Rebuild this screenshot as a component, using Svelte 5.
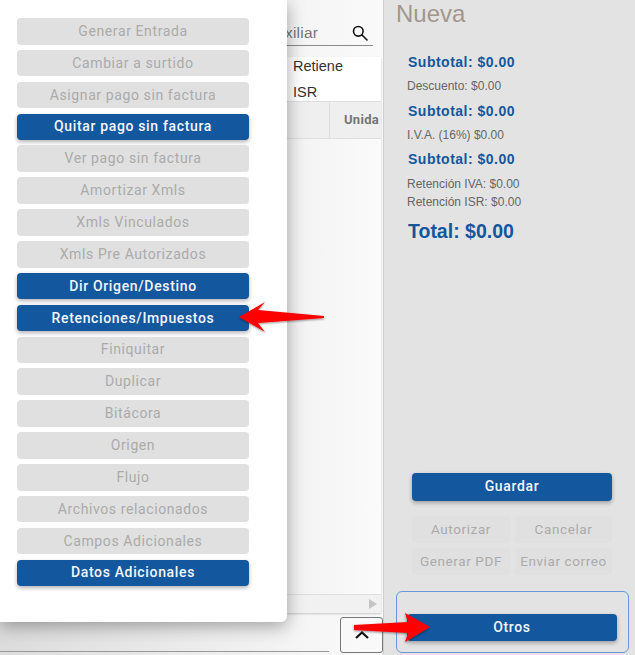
<script>
	const menu = [
		['Generar Entrada', false],
		['Cambiar a surtido', false],
		['Asignar pago sin factura', false],
		['Quitar pago sin factura', true],
		['Ver pago sin factura', false],
		['Amortizar Xmls', false],
		['Xmls Vinculados', false],
		['Xmls Pre Autorizados', false],
		['Dir Origen/Destino', true],
		['Retenciones/Impuestos', true],
		['Finiquitar', false],
		['Duplicar', false],
		['Bitácora', false],
		['Origen', false],
		['Flujo', false],
		['Archivos relacionados', false],
		['Campos Adicionales', false],
		['Datos Adicionales', true]
	];
</script>

<div class="page">
	<div class="main">
		<div class="search">
			<span>xiliar</span>
			<svg width="16" height="16" viewBox="0 0 16 16" fill="none" stroke="#111" stroke-width="1.6">
				<circle cx="6.3" cy="6.3" r="4.8" />
				<path d="M9.8 9.8L15 15" stroke-linecap="round" />
			</svg>
		</div>
		<div class="table">
			<div class="filters">
				<span>Retiene</span>
				<span>ISR</span>
			</div>
			<div class="head">
				<div class="cell first"></div>
				<div class="cell">Unida</div>
			</div>
			<div class="body"></div>
			<div class="scroll">
				<svg width="10" height="12" viewBox="0 0 10 12"><path d="M1 1L9 6L1 11Z" fill="#c4c4c4" /></svg>
			</div>
		</div>
		<div class="bottom">
			<div class="underline"></div>
			<div class="toggle">
				<svg width="16" height="10" viewBox="0 0 16 10" fill="none" stroke="#111" stroke-width="2.2"><path d="M2 8L8 2.5L14 8" /></svg>
			</div>
		</div>
	</div>

	<div class="side">
		<h1>Nueva</h1>
		<div class="totals">
			<p class="sub">Subtotal: $0.00</p>
			<p class="row">Descuento: $0.00</p>
			<p class="sub">Subtotal: $0.00</p>
			<p class="row">I.V.A. (16%) $0.00</p>
			<p class="sub">Subtotal: $0.00</p>
			<p class="row gap">Retención IVA: $0.00</p>
			<p class="row tight">Retención ISR: $0.00</p>
			<p class="total">Total: $0.00</p>
		</div>
		<div class="actions">
			<button class="btn on">Guardar</button>
			<div class="grid">
				<button class="btn soft">Autorizar</button>
				<button class="btn soft">Cancelar</button>
				<button class="btn soft">Generar PDF</button>
				<button class="btn soft">Enviar correo</button>
			</div>
		</div>
		<div class="others">
			<button class="btn on">Otros</button>
		</div>
	</div>

	<div class="menu">
		{#each menu as [label, active]}
			<button class="btn" class:on={active}>{label}</button>
		{/each}
	</div>

	<svg class="arrows" width="635" height="655" viewBox="0 0 635 655">
		<defs>
			<filter id="sh" x="-20%" y="-20%" width="140%" height="150%">
				<feDropShadow dx="0" dy="1" stdDeviation="1" flood-color="#000" flood-opacity="0.45" />
			</filter>
		</defs>
		<path filter="url(#sh)" fill="#fe0000" d="M239 317L265 302L258 310L324 316V318L258 323L265 332Z" />
		<path filter="url(#sh)" fill="#fe0000" d="M430 627L405 613L408 622L354 625V630L408 633L405 642Z" />
	</svg>
</div>

<style>
	:global(body) {
		margin: 0;
	}

	.page {
		position: relative;
		display: flex;
		width: 635px;
		height: 655px;
		overflow: hidden;
		background: #fff;
		font-family: "Liberation Sans", Arial, sans-serif;
	}

	.main {
		display: flex;
		flex-direction: column;
		width: 384px;
		background: linear-gradient(90deg, #dcdcdc 0, #f6f6f6 312px, #fafafa 100%);
		box-sizing: border-box;
		border-right: 1px solid #cfcfcf;
	}

	.search {
		display: flex;
		align-items: center;
		justify-content: space-between;
		box-sizing: border-box;
		width: 88px;
		height: 46px;
		margin-left: 285px;
		padding: 20px 5px 0 0;
		border-bottom: 1px solid #8a8a8a;
		font-size: 15.5px;
		letter-spacing: 0.2px;
		color: #777;
	}

	.table {
		display: flex;
		flex: none;
		flex-direction: column;
		height: 556px;
		width: 94px;
		margin: 11px 0 0 287px;
		background: linear-gradient(90deg, #f2f2f2, #fbfbfb);
		box-shadow: 0 1px 2px rgba(0, 0, 0, 0.2);
	}

	.filters {
		display: flex;
		flex-direction: column;
		gap: 8px;
		height: 44px;
		padding-left: 6px;
		font-size: 14.5px;
		line-height: 18px;
		color: #333;
		background: #fff;
		border-bottom: 1px solid #dedede;
	}

	.head {
		display: flex;
		height: 36px;
		border-bottom: 1px solid #dedede;
		background: #efefef;
	}

	.cell {
		flex: 1;
		overflow: hidden;
		padding: 10px 0 0 14px;
		font-size: 13px;
		font-weight: 700;
		letter-spacing: 0.3px;
		white-space: nowrap;
		color: #757575;
		font-family: Roboto, sans-serif;
	}

	.cell.first {
		flex: none;
		width: 43px;
		box-sizing: border-box;
		border-right: 1px solid #dedede;
	}

	.body {
		flex: 1;
		border-bottom: 1px solid #dedede;
	}

	.scroll {
		display: flex;
		align-items: center;
		justify-content: flex-end;
		height: 18px;
		padding-right: 3px;
		background: #f1f1f1;
	}

	.bottom {
		display: flex;
		align-items: flex-end;
		flex: 1;
	}

	.underline {
		width: 329px;
		height: 1px;
		margin-bottom: 3px;
		background: #999;
	}

	.toggle {
		display: flex;
		align-items: center;
		justify-content: center;
		box-sizing: border-box;
		width: 43px;
		height: 36px;
		margin: 0 0 2px 11px;
		border: 1px solid #777;
		border-radius: 3px;
	}

	.side {
		display: flex;
		flex-direction: column;
		flex: 1;
		box-sizing: border-box;
		padding: 0 6px 2px 12px;
		background: #e3e3e3;
	}

	h1 {
		margin: 0;
		font-size: 24px;
		font-weight: 400;
		line-height: 28px;
		color: #a1978e;
	}

	.totals {
		margin: 25px 0 0 12px;
	}

	.totals p {
		margin: 0;
		white-space: nowrap;
	}

	.sub {
		padding-bottom: 7px;
		font-size: 14px;
		font-weight: 700;
		line-height: 18px;
		letter-spacing: 0.5px;
		color: #13579f;
	}

	.row {
		margin-left: -1px !important;
		padding-bottom: 7.5px;
		font-size: 12px;
		line-height: 16px;
		color: #666;
	}

	.row.gap {
		padding-top: 1px;
	}

	.row.tight {
		margin-top: -5.5px !important;
	}

	.total {
		padding-top: 1px;
		font-size: 19.5px;
		font-weight: 700;
		line-height: 24px;
		color: #13579f;
	}

	.actions {
		display: flex;
		flex: none;
		flex-direction: column;
		gap: 15px;
		margin: 230px 0 0 16px;
		width: 200px;
	}

	.grid {
		display: grid;
		grid-template-columns: 98px 97px;
		gap: 5px;
	}

	.others {
		display: flex;
		flex: none;
		align-items: flex-end;
		box-sizing: border-box;
		height: 62px;
		margin-top: auto;
		padding: 0 11px 11px 10px;
		border: 1px solid #6d97d6;
		border-radius: 6px;
	}

	.others .btn {
		flex: 1;
		height: 27px;
	}

	.menu {
		position: absolute;
		left: 0;
		top: 0;
		display: flex;
		flex-direction: column;
		gap: 5.28px;
		box-sizing: border-box;
		width: 287px;
		height: 622px;
		padding: 18px 38px 0 17px;
		background: #fff;
		border-radius: 0 0 6px 0;
		box-shadow: 0 4px 18px rgba(0, 0, 0, 0.35);
	}

	.btn {
		display: block;
		flex: none;
		box-sizing: border-box;
		width: 100%;
		height: 26.6px;
		padding: 0 0 1px;
		border: 0;
		border-radius: 4px;
		background: #e0e0e0;
		color: #ababab;
		font-family: Roboto, sans-serif;
		font-size: 14px;
		letter-spacing: 0.6px;
		white-space: nowrap;
	}

	.btn.on {
		background: #13579f;
		color: #f4f6fa;
		font-weight: 500;
		letter-spacing: 0.65px;
		box-shadow: 0 2px 4px rgba(0, 0, 0, 0.3);
	}

	.actions > .btn.on {
		height: 28px;
	}

	.btn.soft {
		height: 27px;
		background: #e0e0e0;
		font-size: 13.5px;
	}

	.arrows {
		position: absolute;
		left: 0;
		top: 0;
		pointer-events: none;
	}
</style>
